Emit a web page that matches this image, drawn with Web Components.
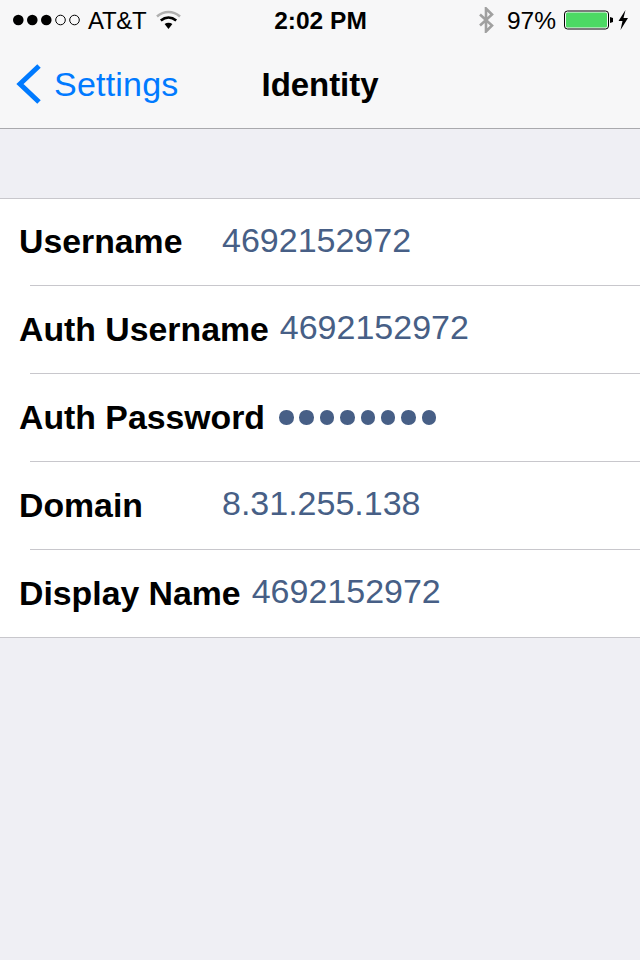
<!DOCTYPE html>
<html>
<head>
<meta charset="utf-8">
<title>Identity</title>
<style>
  html, body { margin: 0; padding: 0; }
  body { width: 640px; height: 960px; background: #efeff4; font-family: "Liberation Sans", Arial, sans-serif; overflow: hidden; }
</style>
</head>
<body>
<ios-header title="Identity" back="Settings"></ios-header>
<field-group>
  <field-row label="Username" value="4692152972" first></field-row>
  <field-row label="Auth Username" value="4692152972"></field-row>
  <field-row label="Auth Password" dots="8"></field-row>
  <field-row label="Domain" value="8.31.255.138"></field-row>
  <field-row label="Display Name" value="4692152972" last></field-row>
</field-group>

<script>
class IosHeader extends HTMLElement {
  connectedCallback() {
    const shadow = this.attachShadow({ mode: "open" });
    shadow.innerHTML = `
      <style>
        :host {
          display: block;
          height: 129px;
          box-sizing: border-box;
          background: #f7f7f8;
          border-bottom: 1px solid #a9a9ad;
          color: #000;
        }
        .status {
          height: 40px;
          display: flex;
          align-items: center;
          justify-content: space-between;
          font-size: 24.5px;
          padding: 0 12px 0 13px;
        }
        .left, .right { display: flex; align-items: center; width: 220px; }
        .right { justify-content: flex-end; }
        .time { font-weight: bold; font-size: 24.5px; padding-top: 2px; }
        .carrier { margin-left: 7px; font-size: 24px; letter-spacing: -0.3px; padding-top: 2px; }
        .wifi { margin-left: 10px; }
        .pct { margin: 0 8px 0 13px; padding-top: 2px; }
        .nav {
          height: 88px;
          display: flex;
          align-items: center;
          position: relative;
          padding-left: 16px;
        }
        .back { display: flex; align-items: center; color: #007aff; font-size: 34px; letter-spacing: 0.2px; }
        .back svg { margin-right: 13px; }
        .title {
          position: absolute;
          left: 0;
          right: 0;
          text-align: center;
          font-size: 33px;
          font-weight: bold;
          letter-spacing: -0.05px;
          padding-top: 2px;
        }
      </style>
      <div class="status">
        <div class="left">
          <svg width="68" height="14" viewBox="0 0 68 14">
            <circle cx="5.3" cy="7" r="5.3"/>
            <circle cx="19.3" cy="7" r="5.3"/>
            <circle cx="33.3" cy="7" r="5.3"/>
            <circle cx="47.5" cy="7" r="4.8" fill="none" stroke="#000" stroke-width="1"/>
            <circle cx="61.5" cy="7" r="4.8" fill="none" stroke="#000" stroke-width="1"/>
          </svg>
          <span class="carrier">AT&amp;T</span>
          <svg class="wifi" width="25" height="20" viewBox="0 0 25 20">
            <path d="M1 6.5 C8 0.5 17 0.5 24 6.5" fill="none" stroke="#b0b0b0" stroke-width="2.6"/>
            <path d="M4.8 10.4 C9.5 6.6 15.5 6.6 20.2 10.4" fill="none" stroke="#000" stroke-width="2.6"/>
            <path d="M8.6 14 C11 12.3 14 12.3 16.4 14 L12.5 19 Z" fill="#000"/>
          </svg>
        </div>
        <div class="time">2:02 PM</div>
        <div class="right">
          <svg width="16" height="26" viewBox="0 0 16 26">
            <path d="M2 7.5 L14 18.5 L8 24.5 L8 1.5 L14 7.5 L2 18.5" fill="none" stroke="#a0a0a0" stroke-width="2.6"/>
          </svg>
          <span class="pct">97%</span>
          <svg width="49" height="20" viewBox="0 0 49 20">
            <rect x="0.5" y="1" width="44" height="18" rx="3" fill="none" stroke="#000" stroke-width="1"/>
            <rect x="2" y="2.5" width="41" height="15" rx="1.5" fill="#4cd964"/>
            <path d="M46 7 L49 8 V12 L46 13 Z" fill="#000"/>
          </svg>
          <svg style="margin-left:5px" width="10" height="20" viewBox="0 0 10 20">
            <path d="M7.5 0 L0.5 11 H4.5 L2.5 20 L10 8 H5.5 Z" fill="#000"/>
          </svg>
        </div>
      </div>
      <div class="nav">
        <div class="title">${this.getAttribute("title")}</div>
        <div class="back">
          <svg width="25" height="40" viewBox="0 0 25 40">
            <path d="M23 2 L4 20 L23 38" fill="none" stroke="#007aff" stroke-width="5"/>
          </svg>
          <span>${this.getAttribute("back")}</span>
        </div>
      </div>
    `;
  }
}

class FieldGroup extends HTMLElement {
  connectedCallback() {
    const shadow = this.attachShadow({ mode: "open" });
    shadow.innerHTML = `
      <style>
        :host {
          display: block;
          margin-top: 69px;
          background: #fff;
          border-top: 1px solid #c8c7cc;
          border-bottom: 1px solid #c8c7cc;
        }
      </style>
      <slot></slot>
    `;
  }
}

class FieldRow extends HTMLElement {
  connectedCallback() {
    const shadow = this.attachShadow({ mode: "open" });
    const dots = Number(this.getAttribute("dots") || 0);
    let value = `<span class="value">${this.getAttribute("value") || ""}</span>`;
    if (dots) {
      value = `<span class="dots">${"<i></i>".repeat(dots)}</span>`;
    }
    shadow.innerHTML = `
      <style>
        :host { display: block; padding-left: 30px; }
        .row {
          height: 87px;
          display: flex;
          align-items: center;
          margin-left: -11px;
        }
        :host([first]) .row { height: 86px; }
        .line { height: 1px; background: #c8c7cc; }
        :host([last]) .line { display: none; }
        .label {
          min-width: 192px;
          margin-right: 11px;
          font-size: 33.8px;
          font-weight: bold;
          color: #000;
          white-space: nowrap;
        }
        :host([first]) .label { padding-bottom: 2px; }
        .value { font-size: 34px; color: #475f86; padding-bottom: 4px; }
        .dots { display: flex; gap: 5.9px; margin-left: 3px; }
        .dots i { width: 14.5px; height: 14.5px; border-radius: 50%; background: #475f86; }
      </style>
      <div class="row">
        <span class="label">${this.getAttribute("label")}</span>
        ${value}
      </div>
      <div class="line"></div>
    `;
  }
}

customElements.define("ios-header", IosHeader);
customElements.define("field-group", FieldGroup);
customElements.define("field-row", FieldRow);
</script>
</body>
</html>
